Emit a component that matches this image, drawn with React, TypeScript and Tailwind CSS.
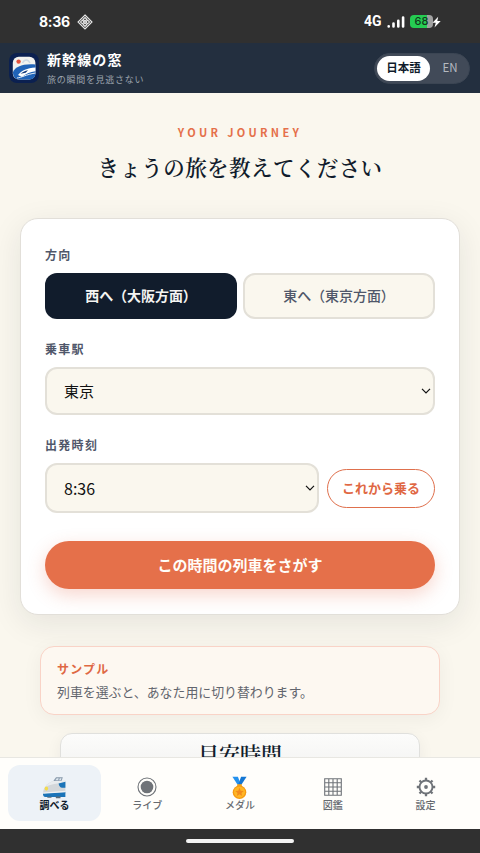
import React from 'react';

interface NavItem {
  label: string;
  icon: React.ReactNode;
  active?: boolean;
}

function TrainIcon() {
  return (
    <svg width="24" height="23" viewBox="0 0 24 23">
      <path d="M11 5.500 14 1.200h6.800L19.500 5.500z" fill="#8798aa" />
      <path d="M13.300 4.300 14.700 2.300h2l-.6 2zM17.100 4.300l.7-2h1.700l-.6 2z" fill="#dce6ee" />
      <path d="M1.200 17.500C1 12 4.500 7.500 11 5l12.400-.3V18z" fill="#d3d7da" />
      <path d="M3 11C5.500 7.800 8 6 11.500 5l11.900-.3v2.100C15 7.300 8.500 8.500 3 11z" fill="#e9ecee" />
      <path d="M16.600 7.600 23.400 5.800v6h-3.200c-2 0-3.200-1.600-3.600-4.200z" fill="#1b74b8" />
      <path d="M1 17.300 23.400 16v5H3.500C1.600 21 .8 19.500 1 17.300z" fill="#1b74b8" />
      <path d="M1.100 16.600 23.400 14.800v1.400L1.100 17.700z" fill="#f0f2f3" />
      <path d="M5 20.700h4.500v1H5.500zM13.500 20.500h5v1.800h-4.500z" fill="#5c6b77" />
      <ellipse cx="4.400" cy="12.600" rx="1.700" ry="2.100" fill="#f3dc4c" />
    </svg>
  );
}

function LiveIcon() {
  return (
    <svg width="20" height="20" viewBox="0 0 20 20">
      <circle cx="10" cy="10" r="9" fill="none" stroke="#6f7378" strokeWidth="1.100" />
      <circle cx="10" cy="10" r="6.300" fill="#6f7378" />
    </svg>
  );
}

function MedalIcon() {
  return (
    <svg className="mt-[2px]" width="17" height="24" viewBox="0 0 18 24">
      <path d="M1.500 0h5.800l3.200 8.500H7z" fill="#2491ee" />
      <path d="M16.500 0h-5.800L7.500 8.500H11z" fill="#1477d4" />
      <path d="M6.500 8h5v2.500h-5z" fill="#f2a31b" />
      <circle cx="9" cy="16.500" r="7.200" fill="#f59a12" />
      <circle cx="9" cy="16.300" r="5.900" fill="#ffb625" />
      <path d="m9 11.800 1.300 3 3.200.3-2.400 2.100.7 3.200L9 18.700l-2.800 1.700.7-3.200-2.400-2.100 3.200-.3z" fill="#f28a1c" />
    </svg>
  );
}

function GridIcon() {
  return (
    <svg width="18" height="18" viewBox="0 0 18 18" fill="none" stroke="#6f7378" strokeWidth="1.100">
      <path d="M.7.7h16.600v16.600H.7zM4.800.7v16.600M9 .7v16.600M13.200.7v16.600M.7 4.800h16.600M.7 9h16.600M.7 13.200h16.600" />
    </svg>
  );
}

function GearIcon() {
  return (
    <svg width="20" height="20" viewBox="0 0 20 20" fill="none" stroke="#6f7378">
      <circle cx="10" cy="10" r="6.500" strokeWidth="1.900" />
      <path
        d="M10 .8v2.500M10 16.700v2.500M.8 10h2.500M16.700 10h2.500M3.500 3.500l1.700 1.700M14.800 14.800l1.700 1.700M3.500 16.500l1.700-1.700M14.800 5.200l1.700-1.700"
        strokeWidth="2.300"
      />
      <circle cx="10" cy="10" r="1.900" fill="#6f7378" stroke="none" />
    </svg>
  );
}

function AppLogo() {
  return (
    <svg width="30" height="30" viewBox="0 0 30 30">
      <rect width="30" height="30" rx="8" fill="#0b2050" />
      <rect x="3.800" y="3.800" width="22.600" height="22.600" rx="6" fill="#f2f2ee" />
      <circle cx="9.600" cy="8.600" r="2.200" fill="#e4523b" />
      <path d="M13.500 10c2-4 5.500-4 7.500 0" fill="none" stroke="#cfd9e4" strokeWidth="1.400" />
      <path d="M4 19c2.500-5 9-8.500 22.400-7.500v9c0 3.500-2.400 5.900-6 5.900H10c-4 0-6.200-3-6-7.400z" fill="#2063b8" />
      <path d="M9 22c3.500-4.500 9-7 17.400-7.500v3.700C21 19 16.500 20.800 13 24z" fill="#fff" />
      <path d="M11.500 20.800c2.500-2 4.500-2.900 7.500-3.500l-2.300 2.500z" fill="#163a78" />
      <path d="M8 25c4.500-.3 9-3.500 18.400-5" fill="none" stroke="#e6edf5" strokeWidth="1" />
    </svg>
  );
}

function Chevron() {
  return (
    <svg width="10" height="6" viewBox="0 0 10 6" fill="none" stroke="#111" strokeWidth="1.200">
      <path d="m1 .8 4 4 4-4" />
    </svg>
  );
}

function StatusBar() {
  return (
    <div className="flex h-[43px] shrink-0 items-center justify-between bg-[#303030] pl-[39px] pr-[39px] text-white">
      <div className="flex items-center gap-[7px]">
        <span className="font-[Inter] text-[14px] font-bold leading-none tracking-[-0.300px]">8:36</span>
        <svg width="16" height="16" viewBox="0 0 16 16" fill="none" stroke="#e8e8e8" strokeWidth="1.100">
          <path d="m8 1 7 7-7 7-7-7z" />
          <path d="m8 3.500 1.800 1.800L8 7.100 6.200 5.300zM5.300 6.200 7.100 8 5.300 9.800 3.500 8zM10.700 6.200 12.500 8l-1.800 1.800L8.900 8zM8 8.900l1.800 1.800L8 12.500l-1.800-1.800z" />
        </svg>
      </div>
      <div className="flex items-center">
        <span className="w-[18px] origin-left scale-x-90 font-[Roboto] text-[15.500px] font-bold leading-none">4G</span>
        <svg className="ml-[5px]" width="18" height="12" viewBox="0 0 18 12" fill="none" stroke="#fff" strokeWidth="2.600" strokeLinecap="round">
          <path d="M1.700 10.200v.3M6.500 7.500v3M11.300 4.800v5.700M16.100 1.500v9" />
        </svg>
        <div className="ml-[5px] flex h-[13px] w-[23px] items-center justify-center overflow-hidden rounded-[4px] bg-[linear-gradient(90deg,#25cc52_76%,#a0a0a0_76%)] font-[Inter] text-[11px] font-medium leading-none text-[#123a1c]">
          68
        </div>
        <svg className="-ml-px" width="9" height="12" viewBox="0 0 9 12">
          <path d="M6.200.8.5 6.800h3.300L2.500 11.500 8.700 5H5.300z" fill="#fff" />
        </svg>
      </div>
    </div>
  );
}

function Header() {
  return (
    <header className="flex h-[50px] shrink-0 items-center bg-[#232f3f] pl-[9px] pr-[10px]">
      <AppLogo />
      <div className="ml-2 flex flex-col">
        <h1 className="-mt-px text-[14px] font-bold leading-[20px] tracking-[1.100px] text-white">新幹線の窓</h1>
        <p className="mt-[4px] text-[9px] leading-[14px] tracking-[0.720px] text-[#9ca3ad]">旅の瞬間を見逃さない</p>
      </div>
      <div className="ml-auto flex h-[31px] w-[96px] items-center rounded-full border border-[#3b4553] bg-[#414a58] p-[2px] text-[11.500px] leading-none">
        <span className="flex h-[25px] w-[53px] items-center justify-center rounded-full bg-white font-bold text-[#111c2c]">日本語</span>
        <span className="flex-1 pl-[3px] text-center text-[#b4b9c0]">EN</span>
      </div>
    </header>
  );
}

function FieldLabel({ children }: { children: React.ReactNode }) {
  return <div className="text-[12px] font-bold leading-[18px] tracking-[1.300px] text-[#50576a]">{children}</div>;
}

function JourneyForm() {
  return (
    <section className="mx-[20px] mt-[35px] h-[397px] shrink-0 rounded-[18px] border border-[#e2dfd9] bg-white px-[24px] pt-[27px] shadow-[0_8px_32px_rgba(17,28,44,0.09)]">
      <FieldLabel>方向</FieldLabel>
      <div className="mt-[9px] flex gap-[6px] text-[14px]">
        <button className="h-[46px] w-[192px] rounded-[12px] bg-[#111c2c] pb-px font-bold tracking-[-0.050px] text-[#f4f4f2]">西へ（大阪方面）</button>
        <button className="h-[46px] w-[192px] rounded-[12px] border-2 border-[#e3e0d8] bg-[#faf7ee] pb-px font-medium tracking-[-0.050px] text-[#50576a]">
          東へ（東京方面）
        </button>
      </div>

      <div className="mt-[21px]">
        <FieldLabel>乗車駅</FieldLabel>
      </div>
      <div className="mt-[9px] flex h-[48px] items-center justify-between rounded-[12px] border-2 border-[#e3e0d8] bg-[#faf7ee] pl-[17px] pr-[2px] text-[15px] text-[#111]">
        <span>東京</span>
        <Chevron />
      </div>

      <div className="mt-[21px]">
        <FieldLabel>出発時刻</FieldLabel>
      </div>
      <div className="mt-[9px] flex items-center gap-2">
        <div className="flex h-[50px] flex-1 items-center justify-between rounded-[12px] border-2 border-[#e3e0d8] bg-[#faf7ee] pl-[17px] pr-[2px] text-[16px] text-[#111]">
          <span>8:36</span>
          <Chevron />
        </div>
        <button className="h-[39px] w-[108px] rounded-full border-[1.500px] border-[#df704d] text-[13px] font-bold text-[#df6844]">
          これから乗る
        </button>
      </div>

      <button className="mt-[28px] h-[48px] w-full rounded-full bg-[#e5704a] text-[15px] font-bold text-[#fffdf8] shadow-[0_6px_18px_rgba(229,90,60,0.25)]">
        この時間の列車をさがす
      </button>
    </section>
  );
}

const navItems: NavItem[] = [
  { label: '調べる', icon: <TrainIcon />, active: true },
  { label: 'ライブ', icon: <LiveIcon /> },
  { label: 'メダル', icon: <MedalIcon /> },
  { label: '図鑑', icon: <GridIcon /> },
  { label: '設定', icon: <GearIcon /> },
];

function BottomNav() {
  return (
    <nav className="grid h-[72px] shrink-0 grid-cols-5 border-t border-[#e8e7e2] bg-[#fffefb] px-[8px] pb-[8px] pt-[7px]">
      {navItems.map((item) => (
        <div
          key={item.label}
          className={`flex flex-col items-center rounded-[12px] pt-[10px] text-[10px] leading-[14px] ${
            item.active ? 'bg-[#edf2f7] font-bold text-[#111c2c]' : 'font-medium text-[#666a70]'
          }`}
        >
          <div className="flex h-[24px] items-center justify-center">{item.icon}</div>
          <span className="-mt-px">{item.label}</span>
        </div>
      ))}
    </nav>
  );
}

export default function App() {
  return (
    <div className="flex h-[853px] w-[480px] flex-col overflow-hidden bg-[#faf7ee] font-['Noto_Sans_CJK_JP',sans-serif]">
      <StatusBar />
      <Header />
      <main className="flex min-h-0 flex-1 flex-col overflow-hidden">
        <p className="mt-[30px] shrink-0 text-center text-[11px] font-bold leading-[18px] tracking-[3.300px] text-[#e5704a]">
          YOUR JOURNEY
        </p>
        <h2 className="mt-[10px] h-[32px] shrink-0 text-center font-['Noto_Serif_CJK_JP','Noto_Serif_JP','Noto_Sans_CJK_JP',serif] text-[21.500px] font-semibold leading-[32px] tracking-[0.430px] text-[#111c2c]">
          きょうの旅を教えてください
        </h2>
        <JourneyForm />
        <section className="mx-[40px] mt-[31px] h-[69px] shrink-0 rounded-[14px] border border-[#f9d3c7] bg-[#fdf8f1] px-[16px] pt-[12px] shadow-[0_4px_20px_rgba(17,28,44,0.05)]">
          <h3 className="text-[12px] font-bold leading-[19px] tracking-[1.200px] text-[#df6844]">サンプル</h3>
          <p className="mt-[4px] text-[12.900px] leading-[20px] text-[#62656d]">列車を選ぶと、あなた用に切り替わります。</p>
        </section>
        <section className="mx-[60px] mt-[18px] h-[100px] shrink-0 rounded-t-[12px] border border-[#e0e0dd] bg-linear-to-b from-[#fcfcfb] to-[#e4e4e2] pt-[3px] shadow-[0_4px_16px_rgba(17,28,44,0.06)]">
          <h2 className="text-center font-['Noto_Serif_CJK_JP','Noto_Serif_JP','Noto_Sans_CJK_JP',serif] text-[21px] font-semibold leading-[32px] text-[#111c2c]">目安時間</h2>
        </section>
      </main>
      <BottomNav />
      <div className="flex h-[24px] shrink-0 items-center justify-center bg-[#303030]">
        <div className="h-[4px] w-[108px] rounded-full bg-[#f4f4f4]" />
      </div>
    </div>
  );
}
